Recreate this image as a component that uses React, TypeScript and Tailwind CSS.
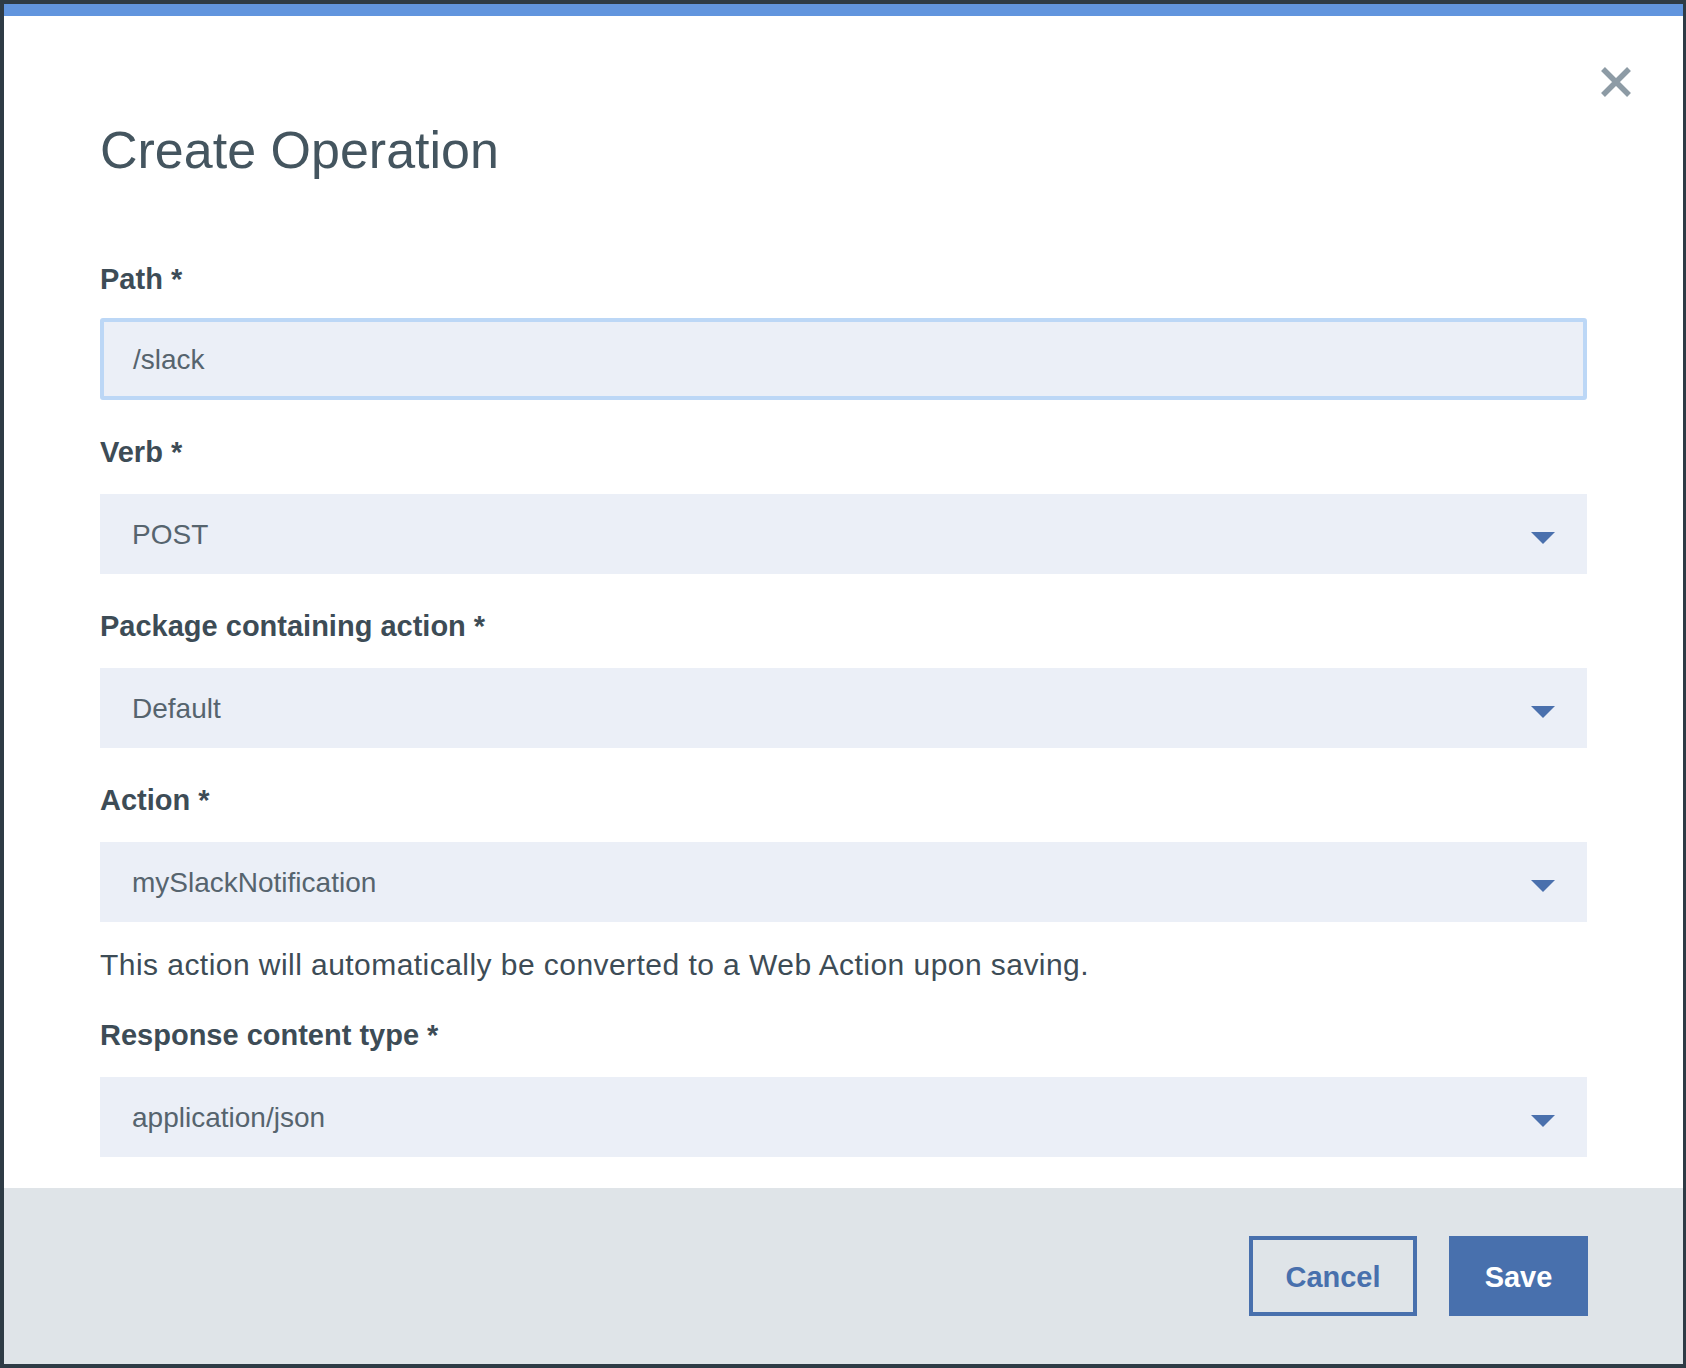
import React from "react";

const font = { fontFamily: '"Liberation Sans", Arial, Helvetica, sans-serif' };

function Arrow() {
  return (
    <svg width="24" height="12" viewBox="0 0 24 12" className="mt-[7px] shrink-0">
      <polygon points="0,0 24,0 12,12" fill="#4a70ad" />
    </svg>
  );
}

function Label({ children, mb = "mb-[22px]" }: { children: React.ReactNode; mb?: string }) {
  return (
    <div className={`h-[40px] leading-[40px] text-[29px] font-bold text-[#3d4c56] ${mb}`}>{children}</div>
  );
}

function Select({ value, mb = "mb-[32px]" }: { value: string; mb?: string }) {
  return (
    <div className={`h-[80px] bg-[#ebeff7] flex items-center justify-between pl-[32px] pr-[32px] ${mb}`}>
      <span className="text-[28px] text-[#56646e] mt-[2px]">{value}</span>
      <Arrow />
    </div>
  );
}

export default function App() {
  return (
    <div className="w-[1686px] h-[1368px] bg-[#2e3b45] pl-[4px] pt-[4px] overflow-hidden" style={font}>
      <div className="w-[1679px] h-[1360px] bg-white flex flex-col relative">
        <div className="h-[12px] bg-[#6195de]" />
        <button className="absolute top-[62px] right-[51px] w-[32px] h-[32px]" aria-label="Close">
          <svg width="32" height="32" viewBox="0 0 32 32">
            <path d="M3 3 L29 29 M29 3 L3 29" stroke="#8d9ba5" strokeWidth="5.5" fill="none" />
          </svg>
        </button>
        <div className="flex-1 px-[96px] pt-[108px]">
          <h1 className="h-[52px] leading-[52px] text-[52px] font-normal text-[#44555f] mb-[83px]">Create Operation</h1>

          <Label mb="mb-[19px]">Path *</Label>
          <div className="h-[82px] bg-[#ebeff7] border-4 border-[#bcd7f6] rounded-[3px] flex items-center pl-[29px] mb-[32px]">
            <span className="text-[28px] text-[#56646e] mt-[2px]">/slack</span>
          </div>

          <Label>Verb *</Label>
          <Select value="POST" />

          <Label>Package containing action *</Label>
          <Select value="Default" />

          <Label>Action *</Label>
          <Select value="mySlackNotification" mb="mb-[23px]" />

          <p className="h-[40px] leading-[40px] text-[30px] tracking-[0.45px] text-[#3d4c56] mb-[30px]">
            This action will automatically be converted to a Web Action upon saving.
          </p>

          <Label>Response content type *</Label>
          <Select value="application/json" mb="mb-0" />
        </div>
        <div className="h-[176px] bg-[#dfe4e8] flex items-center justify-end gap-[32px] pr-[95px]">
          <button className="w-[168px] h-[80px] border-4 border-[#4870ad] text-[#4870ad] text-[29px] font-bold pt-[3px]">
            Cancel
          </button>
          <button className="w-[139px] h-[80px] bg-[#4870ad] text-white text-[29px] font-bold pt-[3px]">Save</button>
        </div>
      </div>
    </div>
  );
}
